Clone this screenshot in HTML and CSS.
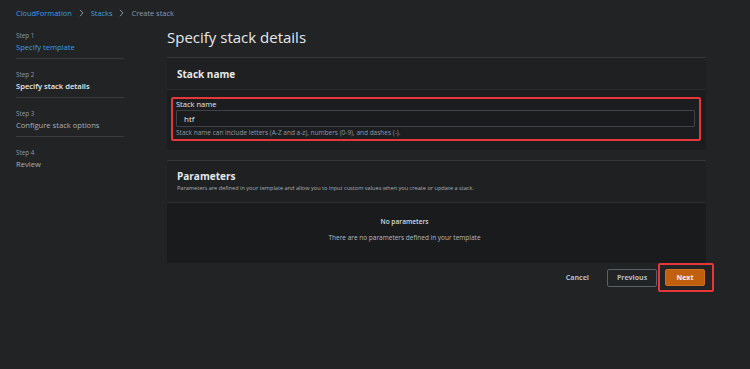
FILE: index.html
```html
<!DOCTYPE html>
<html lang="en">
<head>
<meta charset="utf-8">
<title>Specify stack details</title>
<link rel="stylesheet" href="styles.css">
</head>
<body>
<nav class="breadcrumbs">
  <a class="crumb link">CloudFormation</a>
  <svg class="sep" viewBox="0 0 6 10" width="6" height="10"><path d="M1 1l4 4-4 4" fill="none" stroke="#8d99a8" stroke-width="1.2"/></svg>
  <a class="crumb link">Stacks</a>
  <svg class="sep" viewBox="0 0 6 10" width="6" height="10"><path d="M1 1l4 4-4 4" fill="none" stroke="#8d99a8" stroke-width="1.2"/></svg>
  <span class="crumb current">Create stack</span>
</nav>
<div class="layout">
  <aside class="steps">
    <div class="step">
      <div class="step-num">Step 1</div>
      <div class="step-name link">Specify template</div>
    </div>
    <div class="step">
      <div class="step-num">Step 2</div>
      <div class="step-name active">Specify stack details</div>
    </div>
    <div class="step">
      <div class="step-num">Step 3</div>
      <div class="step-name">Configure stack options</div>
    </div>
    <div class="step last">
      <div class="step-num">Step 4</div>
      <div class="step-name">Review</div>
    </div>
  </aside>
  <main class="content">
    <h1 class="title">Specify stack details</h1>
    <section class="card card-name">
      <header class="card-head"><h2>Stack name</h2></header>
      <div class="card-body">
        <div class="highlight field">
          <label class="field-label">Stack name</label>
          <div class="input">htf</div>
          <div class="field-help">Stack name can include letters (A-Z and a-z), numbers (0-9), and dashes (-).</div>
        </div>
      </div>
    </section>
    <section class="card card-params">
      <header class="card-head params-head">
        <h2>Parameters</h2>
        <p class="card-desc">Parameters are defined in your template and allow you to input custom values when you create or update a stack.</p>
      </header>
      <div class="card-body empty">
        <div class="empty-title">No parameters</div>
        <div class="empty-text">There are no parameters defined in your template</div>
      </div>
    </section>
    <div class="actions">
      <button class="btn btn-link">Cancel</button>
      <button class="btn btn-normal">Previous</button>
      <div class="highlight next-wrap"><button class="btn btn-primary">Next</button></div>
    </div>
  </main>
</div>
</body>
</html>
```
FILE: styles.css
```css
* { box-sizing: border-box; }
html, body { margin: 0; padding: 0; }
body {
  background: #212325;
  color: #d5dbdb;
  font-family: "Open Sans", "Noto Sans", sans-serif;
  width: 750px;
  height: 369px;
  overflow: hidden;
}
.link { color: #3f9fe4; }
.breadcrumbs {
  display: flex;
  align-items: center;
  gap: 7px;
  padding: 5px 16px 0;
  height: 20px;
  font-size: 7.4px;
}
.crumb.current { color: #8d99a8; }
.sep { width: 5px; height: 8px; }
.layout {
  display: grid;
  grid-template-columns: 108px 539px;
  column-gap: 43px;
  padding-left: 16px;
}
.steps { padding-top: 8px; }
.step {
  padding: 3px 0 8px;
  border-bottom: 1px solid #3a3d40;
  margin-bottom: 8px;
  height: 31px;
}
.step.last { border-bottom: none; }
.step-num { font-size: 6.3px; color: #8d99a8; line-height: 10px; }
.step-name { font-size: 7.6px; line-height: 12px; color: #a9b0b6; }
.step-name.link { color: #3f9fe4; }
.step-name.active { color: #e6e9eb; font-weight: 600; }
.title {
  margin: 0;
  font-size: 15px;
  font-weight: 400;
  color: #e6e9eb;
  height: 37px;
  padding-top: 6px;
  line-height: 22px;
}
.card {
  background: #1c1d1f;
  border-top: 1px solid #34373a;
}
.card-head {
  background: #1e2022;
  border-bottom: 1px solid #2a2c2f;
  height: 32px;
  padding: 0 10px;
  display: flex;
  flex-direction: column;
  justify-content: center;
}
.card-head h2 { margin: 0; font-size: 10px; font-weight: 700; color: #e6e9eb; line-height: 14px; }
.card-name .card-body {
  padding: 7px 5px 9px 4px;
  height: 60px;
}
.highlight {
  border: 2px solid #e8373b;
  border-radius: 2px;
}
.field { padding: 0 4px 1px 3px; }
.field-label { display: block; font-size: 7.5px; line-height: 10px; color: #e6e9eb; }
.input {
  margin-top: 1px;
  height: 17px;
  border: 1px solid #3f4246;
  background: #1a1b1d;
  border-radius: 1px;
  font-size: 8px;
  line-height: 15px;
  padding-left: 7px;
  color: #e6e9eb;
}
.field-help { font-size: 6.5px; color: #8d99a8; line-height: 11px; }
.card-params { margin-top: 10px; }
.params-head { height: 42px; padding-top: 8px; justify-content: flex-start; }
.card-desc { margin: 1px 0 0; font-size: 5.6px; color: #a9b0b6; line-height: 8px; }
.empty {
  background: #1a1b1d;
  height: 60px;
  text-align: center;
  padding: 14px 64px 0 0;
}
.empty-title { font-size: 6.6px; font-weight: 600; color: #d5dbdb; line-height: 10px; }
.empty-text { font-size: 6.5px; color: #b3bcc2; margin-top: 6px; line-height: 10px; }
.actions {
  display: flex;
  justify-content: flex-end;
  align-items: center;
  margin-top: 0;
  margin-right: -8px;
}
.btn {
  font-family: inherit;
  font-size: 7px;
  font-weight: 700;
  border-radius: 2px;
  cursor: pointer;
}
.btn-link {
  background: none;
  border: none;
  color: #b3bcc2;
  margin-right: 18px;
  padding: 0;
}
.btn-normal {
  background: transparent;
  border: 1px solid #5b6168;
  color: #b3bcc2;
  width: 50px;
  height: 18px;
  margin-right: 1px;
}
.next-wrap { padding: 4px 7px 4px 5px; }
.btn-primary {
  background: #c0600f;
  border: 1px solid #cc6f20;
  color: #f4f4f4;
  width: 40px;
  height: 17px;
  display: block;
}
```
